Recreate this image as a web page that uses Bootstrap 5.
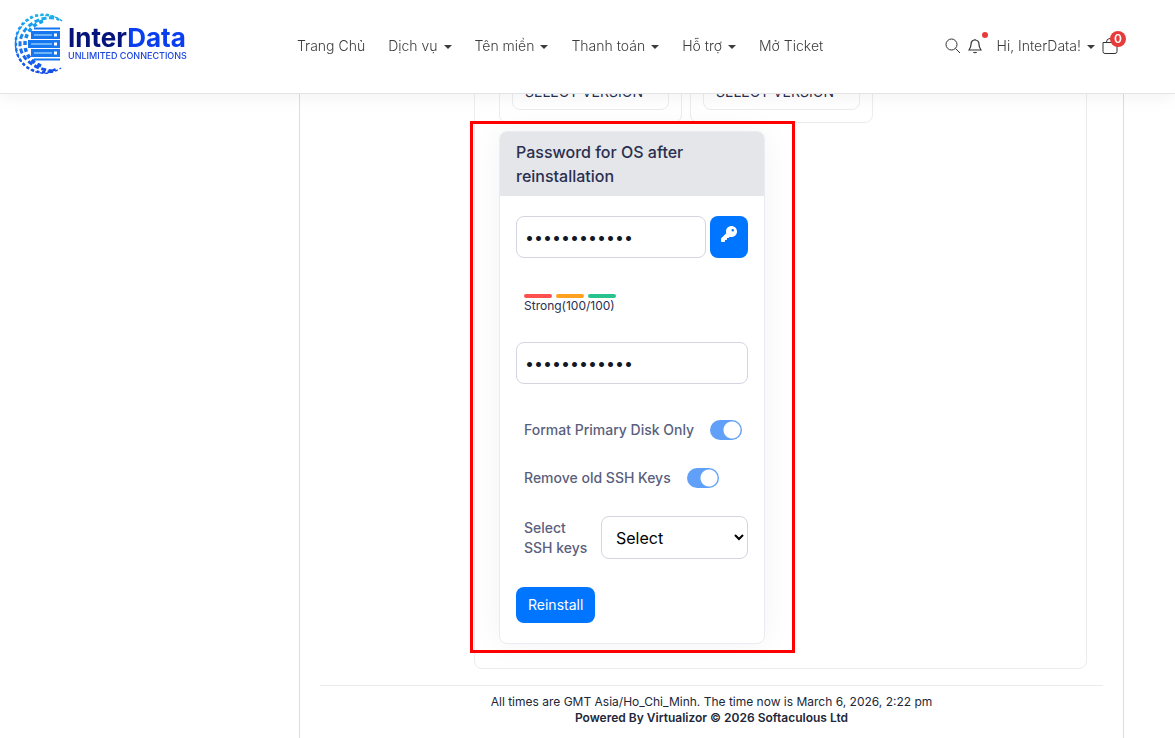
<!DOCTYPE html>
<html lang="vi">
<head>
<meta charset="utf-8">
<meta name="viewport" content="width=device-width, initial-scale=1">
<title>InterData</title>
<link rel="stylesheet" href="https://cdn.jsdelivr.net/npm/bootstrap@5.3.0/dist/css/bootstrap.min.css">
<style>
body{font-family:Inter,"Liberation Sans",sans-serif;color:#2a2f4f;background:#fff}
.site-bar{height:94px;background:#fff;border-bottom:1px solid #e3e4e6;box-shadow:0 4px 16px rgba(0,0,0,.05);color:#444;padding-bottom:2px}
.brand-link{width:283px;margin-left:14px;padding-bottom:4px}
.brand-name{font-size:26px;line-height:24px;font-weight:700;color:#04147a}
.brand-name span{color:#0a3ff0}
.brand-tag{font-size:9px;line-height:12px;font-weight:500;color:#1a45e0}
.menu{gap:23px}
.menu-link{font-size:14px;line-height:20px;font-weight:300;color:#3c3c3c;text-decoration:none;white-space:nowrap}
.menu-link.dropdown-toggle::after{margin-left:6px;vertical-align:2px;border-top-width:4px;border-left-width:4px;border-right-width:4px}
.tools{margin-right:57px;gap:7px}
.icon-btn{border:0;background:none;padding:0;display:flex;position:relative;color:#333}
.red-dot{position:absolute;width:6px;height:6px;border-radius:50%;background:#e93a3a;right:-6px;top:-6px}
.cart-count{position:absolute;width:16px;height:16px;border-radius:50%;background:#e93a3a;color:#fff;font-size:12px;line-height:16px;font-weight:600;text-align:center;left:8px;top:-7px}
.frame{min-height:100vh;margin-left:299px;margin-right:51px;border:solid #dcdde0;border-width:0 1px;padding:0 20px}
.panel-box{margin-left:154px;margin-right:16px;border:1px solid #ebecf0;border-radius:8px;padding:60px 24px 24px}
.os-card{border:1px solid #ebecf0;border-radius:8px;padding:8px 12px 12px;width:183px}
.ver-select{width:100%;height:40px;border:1px solid #ebecf0;border-radius:8px;background:#fff;font-size:14px;color:#2a2f4f;padding:2px 5px 0 12px;text-align:left}
.pw-wrap{width:266px;margin-top:8px}
.pw-card{border:1px solid #ebecf2;border-radius:8px;box-shadow:0 0 32px rgba(30,40,90,.05);background:#fff}
.pw-head{background:#e4e6ea;border-radius:7px 7px 0 0;font-size:16px;line-height:24px;font-weight:500;padding:8px 16px;margin:0}
.pw-body{padding:20px 16px}
.outline-mark{position:absolute;inset:-10px -30px -9px -29px;border:3px solid #f00;pointer-events:none}
.pw-input,.key-select{height:42px;border:1px solid #d3d5e0;border-radius:8px;font-size:16px;color:#111827;padding:0 8px;background:#fff}
.pw-input{display:block;min-width:0;width:100%}
.blue-btn{background:#0075ff;color:#fff;border:0;border-radius:8px;font-size:14px;line-height:20px;font-weight:400}
.key-btn{width:38px;height:42px;flex:none;padding:0 0 8px}
.send-btn{display:block;padding:8px 12px;margin-top:28px}
.strength-row{margin:36px 0 28px}
.meter{width:28px;height:4px;border-radius:2px}
.strength{font-size:12px;line-height:16px}
.opt-row{margin-top:28px}
.pw-input + .opt-row{margin-top:36px}
.opt-label{font-size:14px;line-height:20px;font-weight:500;color:#5a5f7d}
.switch-box{appearance:none;width:32px;height:20px;border-radius:10px;background:radial-gradient(circle at 22px 10px,#fff 8px,#61a0f8 9px);margin:0}
.key-select{width:147px;height:43px;padding:0 10px;color:#000}
.foot{border-top:1px solid #ebecee;margin-top:16px;padding-top:8px;font-size:12px;line-height:16px;color:#212738}
.foot strong{font-weight:600}
</style>
<script src="https://cdn.jsdelivr.net/npm/bootstrap@5.3.0/dist/js/bootstrap.bundle.min.js"></script>
</head>
<body>
<header class="site-bar fixed-top d-flex align-items-center">
  <a href="#" class="brand-link d-flex align-items-center text-decoration-none flex-shrink-0">
    <svg width="54" height="62" viewBox="0 0 54 62" aria-hidden="true">
      <defs><linearGradient id="g" gradientUnits="userSpaceOnUse" x1="0" y1="0" x2="0" y2="62"><stop offset="0" stop-color="#19b5ea"/><stop offset=".5" stop-color="#1a78ee"/><stop offset="1" stop-color="#1247e8"/></linearGradient></defs>
      <g fill="none" stroke="url(#g)">
        <path d="M48 8A29 29 0 1 0 47 55" stroke-width="1.500" stroke-dasharray="3 2"/>
        <path d="M45 7A27 27 0 0 0 2 31A27 27 0 0 0 42 56" stroke-width="2.500" stroke-dasharray="3 2.500"/>
        <path d="M40 5C24 3 6 15 6 31C6 46 22 57 39 58" stroke-width="3" stroke-dasharray="5 2.500"/>
        <path d="M29 8C17 12 11 22 11 31C11 41 17 49 27 53" stroke-width="3.500" stroke-dasharray="4 3"/>
      </g>
      <g fill="#1677ee">
        <path d="M20 14.500H46V16.500H20zM20 45.500H46V47.500H20z"/>
        <rect x="17" y="18" width="29" height="8"/><rect x="14" y="27" width="32" height="8"/><rect x="17" y="36" width="29" height="8"/>
      </g>
      <g fill="#6fb4f8"><path d="M20 21H38V23H20zM17 30H38V32H17zM20 39H38V41H20z"/></g>
      <g fill="#fff"><path d="M40 20.500H43V23.500H40zM40 29.500H43V32.500H40zM40 38.500H43V41.500H40z"/></g>
    </svg>
    <span class="d-flex flex-column"><span class="brand-name">Inter<span>Data</span></span><span class="brand-tag">UNLIMITED CONNECTIONS</span></span>
  </a>
  <nav class="menu d-flex flex-grow-1">
    <a class="menu-link" href="#">Trang Chủ</a>
    <a class="menu-link dropdown-toggle" href="#">Dịch vụ</a>
    <a class="menu-link dropdown-toggle" href="#">Tên miền</a>
    <a class="menu-link dropdown-toggle" href="#">Thanh toán</a>
    <a class="menu-link dropdown-toggle" href="#">Hỗ trợ</a>
    <a class="menu-link" href="#">Mở Ticket</a>
  </nav>
  <div class="tools d-flex align-items-center">
    <button class="icon-btn" type="button" aria-label="Search"><svg width="16" height="16" viewBox="0 0 16 16" fill="none" stroke="currentColor"><circle cx="6.500" cy="6.500" r="5.500"/><path d="M10.500 10.500L15 15"/></svg></button>
    <button class="icon-btn" type="button" aria-label="Notifications"><svg width="14" height="16" viewBox="0 0 14 16" fill="none" stroke="currentColor" stroke-width="1.200"><path d="M7 2C4 2 3 4 3 6.500C3 9 2 10.500 1 12H13C12 10.500 11 9 11 6.500C11 4 10 2 7 2zM5.500 14C6 15 8 15 8.500 14M7 1V2"/></svg><span class="red-dot"></span></button>
    <a class="menu-link dropdown-toggle ms-2" href="#">Hi, InterData!</a>
    <button class="icon-btn" type="button" aria-label="Cart"><svg width="16" height="16" viewBox="0 0 16 16" fill="none" stroke="currentColor"><path d="M1 4.500H15V13.500Q15 15.500 13 15.500H3Q1 15.500 1 13.500zM4.500 4.500V4A3.500 3.500 0 0 1 11.500 4V4.500"/></svg><span class="cart-count">0</span></button>
  </div>
</header>
<main class="frame">
  <div class="panel-box">
    <div class="d-flex gap-2">
      <div class="os-card"><button class="ver-select d-flex align-items-center justify-content-between" type="button">SELECT VERSION<svg width="7" height="5" viewBox="0 0 7 5" fill="none" stroke="#9a9db0"><path d="M0.500 1L3.500 4L6.500 1"/></svg></button></div>
      <div class="os-card"><button class="ver-select d-flex align-items-center justify-content-between" type="button">SELECT VERSION<svg width="7" height="5" viewBox="0 0 7 5" fill="none" stroke="#9a9db0"><path d="M0.500 1L3.500 4L6.500 1"/></svg></button></div>
    </div>
    <div class="pw-wrap position-relative">
      <form class="pw-card">
        <h2 class="pw-head">Password for OS after reinstallation</h2>
        <div class="pw-body">
          <div class="d-flex gap-1"><input class="pw-input" type="password" aria-label="Password" value="abcdefghijkl"><button class="blue-btn key-btn" type="button" aria-label="Generate password"><svg width="16" height="16" viewBox="0 0 512 512" fill="#fff"><path d="M336 352c97 0 176-79 176-176S433 0 336 0 160 79 160 176c0 19 3 37 8 54L7 391c-5 5-7 11-7 17v80c0 13 11 24 24 24h80c13 0 24-11 24-24v-40h40c13 0 24-11 24-24v-40h40c6 0 12-3 17-7l33-33c17 5 35 8 54 8zM376 96a40 40 0 1 1 0 80 40 40 0 0 1 0-80z"/></svg></button></div>
          <div class="strength-row px-2"><div class="d-flex gap-1"><span class="meter" style="background:#ff5050"></span><span class="meter" style="background:#ffa01e"></span><span class="meter" style="background:#28c38c"></span></div><div class="strength">Strong(100/100)</div></div>
          <input class="pw-input" type="password" aria-label="Confirm password" value="abcdefghijkl">
          <div class="opt-row d-flex align-items-center gap-3 ps-2"><label class="opt-label" for="fmt">Format Primary Disk Only</label><input class="switch-box" type="checkbox" role="switch" id="fmt" checked></div>
          <div class="opt-row d-flex align-items-center gap-3 ps-2"><label class="opt-label" for="ssh">Remove old SSH Keys</label><input class="switch-box" type="checkbox" role="switch" id="ssh" checked></div>
          <div class="opt-row d-flex align-items-center justify-content-between ps-2"><label class="opt-label" for="keys">Select<br>SSH keys</label><select class="key-select" id="keys"><option>Select</option></select></div>
          <button class="blue-btn send-btn" type="button">Reinstall</button>
        </div>
      </form>
      <div class="outline-mark"></div>
    </div>
  </div>
  <footer class="foot text-center">All times are GMT Asia/Ho_Chi_Minh. The time now is March 6, 2026, 2:22 pm<br><strong>Powered By Virtualizor © 2026 Softaculous Ltd</strong></footer>
</main>
</body>
</html>
